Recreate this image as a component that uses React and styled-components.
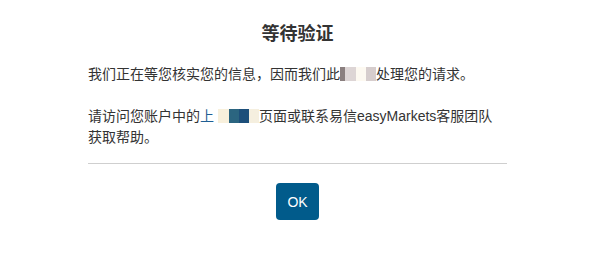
import React from 'react';
import styled, { createGlobalStyle } from 'styled-components';

const Global = createGlobalStyle`
  html, body {
    margin: 0;
    padding: 0;
    background: #ffffff;
  }
  body {
    font-family: "Liberation Sans", "Noto Sans CJK SC", sans-serif;
    color: #333333;
  }
`;

const Dialog = styled.div`
  width: 595px;
  height: 256px;
  box-sizing: border-box;
  padding: 21px 88px 0 88px;
  display: flex;
  flex-direction: column;
`;

const Title = styled.h2`
  margin: 0;
  font-size: 18px;
  line-height: 26px;
  font-weight: 700;
  text-align: center;
  color: #333333;
`;

const Body = styled.div`
  margin-top: 17px;
  padding-right: 8px;
  display: flex;
  flex-direction: column;
  gap: 21px;
`;

const Para = styled.p`
  margin: 0;
  font-size: 14px;
  line-height: 21px;
  color: #333333;
`;

const LinkText = styled.span`
  color: #1f5f94;
`;

const Blur = styled.span`
  display: inline-block;
  vertical-align: -2px;
  width: ${(p) => p.w}px;
  height: 14px;
  background: ${(p) => p.c};
`;

const Divider = styled.hr`
  margin: 15px 0 0 0;
  border: none;
  border-top: 1px solid #cfcfcf;
`;

const Footer = styled.div`
  display: flex;
  justify-content: center;
  margin-top: 19px;
`;

const OkButton = styled.button`
  width: 43px;
  height: 37px;
  border: none;
  border-radius: 4px;
  background: #015b8b;
  color: #ffffff;
  font-family: "Liberation Sans", "Noto Sans CJK SC", sans-serif;
  font-size: 14px;
  cursor: pointer;
`;

const mask1 = [
  ['#8a7f7f', 5],
  ['#ddd5d5', 11],
  ['#fdf9f1', 10],
  ['#d6cdcd', 10],
];

const mask2 = [
  ['#ffffff', 4],
  ['#f8f0dc', 11],
  ['#2b6580', 10],
  ['#1d4f7a', 10],
  ['#f5efdf', 10],
];

export default function App() {
  return (
    <>
      <Global />
      <Dialog>
        <Title>等待验证</Title>
        <Body>
          <Para>
            我们正在等您核实您的信息，因而我们此
            {mask1.map(([c, w], i) => (
              <Blur key={i} c={c} w={w} />
            ))}
            处理您的请求。
          </Para>
          <Para>
            请访问您账户中的<LinkText>上</LinkText>
            {mask2.map(([c, w], i) => (
              <Blur key={i} c={c} w={w} />
            ))}
            页面或联系易信easyMarkets客服团队获取帮助。
          </Para>
        </Body>
        <Divider />
        <Footer>
          <OkButton>OK</OkButton>
        </Footer>
      </Dialog>
    </>
  );
}
